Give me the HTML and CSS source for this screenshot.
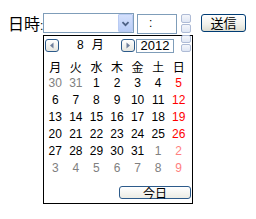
FILE: index.html
```html
<!DOCTYPE html>
<html>
<head>
<meta charset="utf-8">
<link rel="stylesheet" href="styles.css">
</head>
<body>
<div class="form">
  <span class="label">日時<span class="colon">:</span></span>
  <div class="select">
    <span class="select-btn">
      <svg width="15" height="17" viewBox="0 0 15 17"><path d="M4 7 L7.5 10.5 L11 7" fill="none" stroke="#4d6185" stroke-width="2"/></svg>
    </span>
  </div>
  <div class="time">:</div>
  <div class="spin"><span></span><span></span></div>
  <button class="send">送信</button>
</div>
<div class="cal">
  <div class="cal-head">
    <span class="nav"><svg width="12" height="11" viewBox="0 0 12 11"><polygon points="7.5,2.5 4,5.5 7.5,8.5" fill="#6f7f9c"/></svg></span>
    <span class="month"><span class="mnum">8</span>月</span>
    <span class="nav"><svg width="12" height="11" viewBox="0 0 12 11"><polygon points="4.5,2.5 8,5.5 4.5,8.5" fill="#6f7f9c"/></svg></span>
    <span class="year">2012</span>
    <span class="spin cal-spin"><span></span><span></span></span>
  </div>
  <div class="grid">
    <span class="dow">月</span><span class="dow">火</span><span class="dow">水</span><span class="dow">木</span><span class="dow">金</span><span class="dow">土</span><span class="dow">日</span>
    <span class="other">30</span><span class="other">31</span><span>1</span><span>2</span><span>3</span><span>4</span><span class="sun">5</span>
    <span>6</span><span>7</span><span>8</span><span>9</span><span>10</span><span>11</span><span class="sun">12</span>
    <span>13</span><span>14</span><span>15</span><span>16</span><span>17</span><span>18</span><span class="sun">19</span>
    <span>20</span><span>21</span><span>22</span><span>23</span><span>24</span><span>25</span><span class="sun">26</span>
    <span>27</span><span>28</span><span>29</span><span>30</span><span>31</span><span class="other">1</span><span class="other-sun">2</span>
    <span class="other">3</span><span class="other">4</span><span class="other">5</span><span class="other">6</span><span class="other">7</span><span class="other">8</span><span class="other-sun">9</span>
  </div>
  <div class="foot"><button class="today">今日</button></div>
</div>
</body>
</html>
```
FILE: styles.css
```css
html, body {
  margin: 0;
  padding: 0;
  background: #fff;
}
body {
  margin: 8px;
  font-family: "Liberation Sans", "Noto Sans CJK JP", sans-serif;
  font-size: 12px;
  color: #000;
  position: relative;
  width: 240px;
  height: 203px;
}
.form {
  display: flex;
  align-items: flex-start;
  margin-top: 5px;
  height: 21px;
}
.label {
  width: 35px;
  font-family: "Noto Sans CJK JP", sans-serif;
  font-size: 16px;
  line-height: 20px;
  white-space: nowrap;
  letter-spacing: 0;
}
.colon {
  font-family: "Liberation Sans", sans-serif;
  font-size: 12px;
}
.select {
  box-sizing: border-box;
  width: 91px;
  height: 20px;
  border: 1px solid #7f9db9;
  background: #fff;
  display: flex;
  justify-content: flex-end;
  padding: 0;
}
.select-btn {
  width: 15px;
  height: 18px;
  box-sizing: border-box;
  border: 1px solid #b9cbf3;
  border-radius: 1px;
  background: linear-gradient(#d4e0fc, #b9cdf7);
  display: flex;
  align-items: center;
  justify-content: center;
}
.time {
  box-sizing: border-box;
  margin-left: 3px;
  margin-top: 1px;
  width: 40px;
  height: 20px;
  border: 1px solid #7f9db9;
  padding-left: 11px;
  line-height: 17px;
  font-size: 12px;
}
.spin {
  margin-left: 4px;
  margin-top: 1px;
  width: 10px;
  height: 19px;
  display: flex;
  flex-direction: column;
  gap: 1px;
}
.spin span {
  flex: 1;
  box-sizing: border-box;
  border: 1px solid #aebbd6;
  border-radius: 2px;
  background: linear-gradient(#f4f6fb, #dfe6f4);
}
.send {
  box-sizing: border-box;
  margin-left: 10px;
  margin-top: 1px;
  width: 45px;
  height: 18px;
  border: 1px solid #003c74;
  border-radius: 3px;
  background: linear-gradient(#ffffff, #f0f0ea 60%, #dcdcd0);
  font-family: "Noto Sans CJK JP", sans-serif;
  font-size: 13px;
  line-height: 14px;
  padding: 0;
  color: #000;
}
.cal {
  position: absolute;
  left: 35px;
  top: 27px;
  width: 150px;
  height: 169px;
  box-sizing: border-box;
  border: 1px solid #000;
  background: #fff;
  display: flex;
  flex-direction: column;
}
.cal-head {
  display: flex;
  align-items: flex-start;
  height: 17px;
  padding-top: 3px;
}
.nav {
  box-sizing: border-box;
  width: 14px;
  height: 13px;
  margin-left: 1px;
  border: 1px solid #2c5a8a;
  border-radius: 3px;
  background: linear-gradient(#ffffff, #e6e6e0);
  display: flex;
  align-items: center;
  justify-content: center;
}
.month {
  width: 61px;
  padding-left: 18px;
  box-sizing: border-box;
  line-height: 13px;
  font-family: "Liberation Sans", "Noto Sans CJK JP", sans-serif;
  font-size: 12px;
}
.mnum {
  margin-right: 8px;
}
.year {
  box-sizing: border-box;
  margin-left: 1px;
  width: 38px;
  height: 14px;
  border: 1px solid #7f9db9;
  text-align: center;
  font-size: 13px;
  line-height: 12px;
}
.cal-spin {
  margin-left: 7px;
  margin-top: -4px;
  height: 17px;
}
.grid {
  margin-left: 1px;
  margin-top: 2px;
  width: 144px;
  display: grid;
  grid-template-columns: repeat(7, 1fr);
  grid-auto-rows: 17px;
  line-height: 17px;
  text-align: center;
  font-size: 12px;
}
.dow {
  font-family: "Noto Sans CJK JP", sans-serif;
}
.other {
  color: #808080;
}
.sun {
  color: #ff0000;
}
.other-sun {
  color: #ff8080;
}
.foot {
  display: flex;
  justify-content: flex-end;
  margin-top: 9px;
  padding-right: 1px;
}
.today {
  box-sizing: border-box;
  width: 72px;
  height: 13px;
  border: 1px solid #2c5a8a;
  border-radius: 3px;
  background: linear-gradient(#ffffff, #ecece4);
  padding: 0;
  font-family: "Noto Sans CJK JP", sans-serif;
  font-size: 12px;
  line-height: 11px;
  color: #000;
}
```
